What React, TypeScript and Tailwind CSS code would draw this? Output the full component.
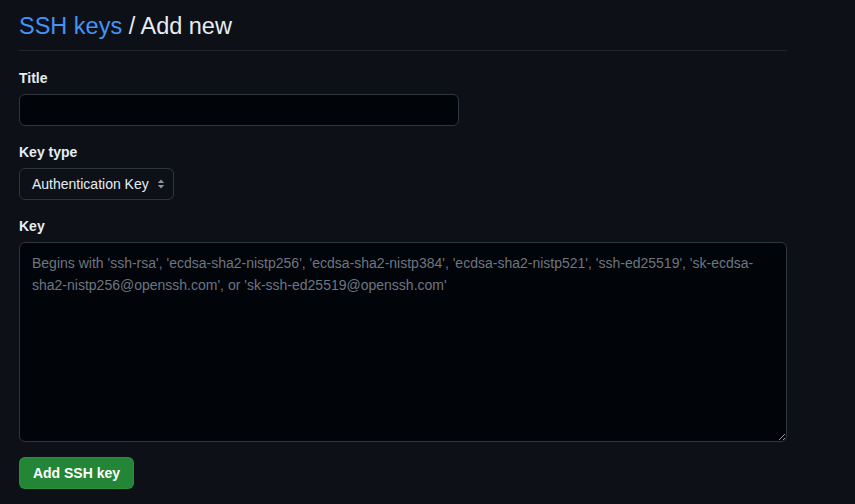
import React from "react";

//-----------------------------------------------------------------------------------------------

const font = "font-['Segoe_UI','Liberation_Sans',Arial,sans-serif]";

function SelectArrows() {
  return (
    <svg width="8" height="12" viewBox="0 0 8 12" className="shrink-0">
      <path d="M4 1.5 L7.2 5 H0.8 Z" fill="#8d96a0"/>
      <path d="M4 10.5 L7.2 7 H0.8 Z" fill="#8d96a0"/>
    </svg>
  );
}

export default function App() {
  return (
    <div className={`min-h-screen w-full bg-[#0d1117] text-[#e6edf3] ${font}`}>
      <div className="w-[768px] ml-[19px] pt-[9px]">
        <div className="border-b border-[#21262d] pb-[7px] text-[23.5px] leading-[34px]">
          <a href="#" className="text-[#4493f8]">SSH keys</a>
          <span> / Add new</span>
        </div>

        <form className="flex flex-col">
          <div className="mt-[16px]">
            <label className="block pt-[2px] text-sm font-bold leading-[19px] mb-[6px]">Title</label>
            <input
              type="text"
              className="block w-[440px] h-[32px] rounded-md border border-[#30363d] bg-[#010409] px-3 text-sm text-[#e6edf3] outline-none"
            />
          </div>

          <div className="mt-[15px]">
            <label className="block pt-[2px] text-sm font-bold leading-[19px] mb-[6px]">Key type</label>
            <div className="flex h-[32px] w-[155px] items-center justify-between gap-2 rounded-md border border-[#30363d] bg-[#0d1117] pl-3 pr-[9px] text-sm text-[#e6edf3] whitespace-nowrap">
              <span>Authentication Key</span>
              <SelectArrows/>
            </div>
          </div>

          <div className="mt-[15px]">
            <label className="block pt-[2px] text-sm font-bold leading-[19px] mb-[6px]">Key</label>
            <textarea
              placeholder="Begins with 'ssh-rsa', 'ecdsa-sha2-nistp256', 'ecdsa-sha2-nistp384', 'ecdsa-sha2-nistp521', 'ssh-ed25519', 'sk-ecdsa-sha2-nistp256@openssh.com', or 'sk-ssh-ed25519@openssh.com'"
              className="block w-[768px] h-[200px] rounded-md border border-[#30363d] bg-[#010409] px-3 py-[9px] text-sm leading-[22px] text-[#e6edf3] placeholder:text-[#6e7681] outline-none"
            />
          </div>

          <div className="mt-[15px]">
            <button
              type="button"
              className="h-[32px] w-[115px] rounded-md border border-[#2ea04366] bg-[#238636] text-sm font-bold text-white"
            >
              Add SSH key
            </button>
          </div>
        </form>
      </div>
    </div>
  );
}
